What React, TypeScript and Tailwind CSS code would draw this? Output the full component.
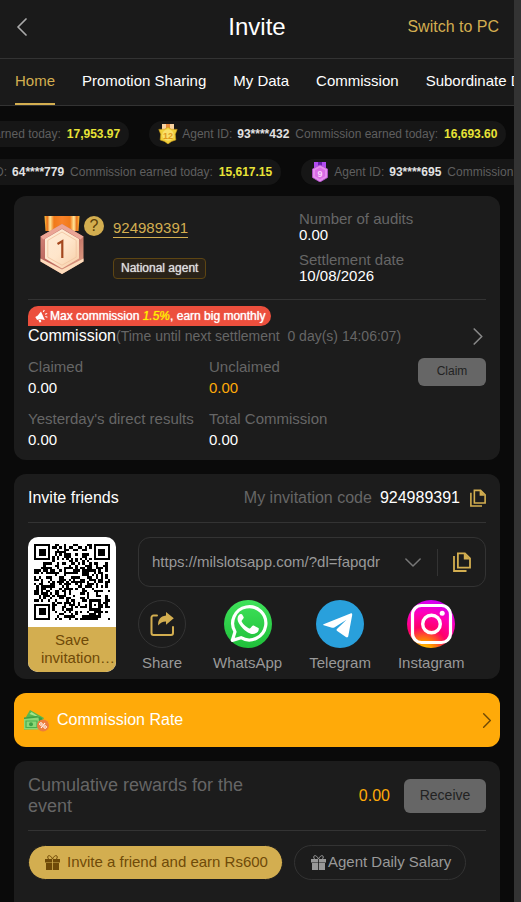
import React from "react";

/* ---------- QR code (version 4, level H, byte mode) ---------- */

const QR_SIZE = 33;
const QR_MASK = 4;

function gfMul(x: number, y: number): number {
  let z = 0;
  for (let i = 7; i >= 0; i--) {
    z = (z << 1) ^ ((z >>> 7) * 0x11d);
    z ^= ((y >>> i) & 1) * x;
  }
  return z;
}

function eccOf(data: number[], degree: number): number[] {
  const gen: number[] = new Array(degree).fill(0);
  gen[degree - 1] = 1;
  let root = 1;
  for (let i = 0; i < degree; i++) {
    for (let j = 0; j < degree; j++) {
      gen[j] = gfMul(gen[j], root);
      if (j + 1 < degree) gen[j] ^= gen[j + 1];
    }
    root = gfMul(root, 2);
  }
  const rem: number[] = new Array(degree).fill(0);
  for (const b of data) {
    const f = b ^ (rem.shift() as number);
    rem.push(0);
    gen.forEach((g, i) => (rem[i] ^= gfMul(g, f)));
  }
  return rem;
}

function qrMatrix(text: string): boolean[][] {
  const bits: number[] = [];
  const put = (v: number, n: number) => {
    for (let i = n - 1; i >= 0; i--) bits.push((v >>> i) & 1);
  };
  put(4, 4);
  put(text.length, 8);
  for (const c of text) put(c.charCodeAt(0), 8);
  put(0, 4);
  const words: number[] = [];
  for (let i = 0; i < 36; i++) {
    words.push(parseInt(bits.slice(i * 8, i * 8 + 8).join(""), 2));
  }
  const blocks = [0, 1, 2, 3].map((b) => words.slice(b * 9, b * 9 + 9));
  const eccs = blocks.map((b) => eccOf(b, 16));
  const stream: number[] = [];
  for (let i = 0; i < 9; i++) blocks.forEach((b) => stream.push(b[i]));
  for (let i = 0; i < 16; i++) eccs.forEach((b) => stream.push(b[i]));

  const n = QR_SIZE;
  const m: boolean[][] = Array.from({ length: n }, () => new Array(n).fill(false));
  const fixed: boolean[][] = Array.from({ length: n }, () => new Array(n).fill(false));
  const set = (x: number, y: number, v: boolean) => {
    if (x < 0 || y < 0 || x >= n || y >= n) return;
    m[y][x] = v;
    fixed[y][x] = true;
  };
  for (let i = 0; i < n; i++) {
    set(6, i, i % 2 === 0);
    set(i, 6, i % 2 === 0);
  }
  for (const [cx, cy] of [[3, 3], [n - 4, 3], [3, n - 4]]) {
    for (let dy = -4; dy <= 4; dy++)
      for (let dx = -4; dx <= 4; dx++) {
        const d = Math.max(Math.abs(dx), Math.abs(dy));
        set(cx + dx, cy + dy, d !== 2 && d !== 4);
      }
  }
  for (let dy = -2; dy <= 2; dy++)
    for (let dx = -2; dx <= 2; dx++)
      set(26 + dx, 26 + dy, Math.max(Math.abs(dx), Math.abs(dy)) !== 1);

  const info = (2 << 3) | QR_MASK;
  let rem = info;
  for (let i = 0; i < 10; i++) rem = (rem << 1) ^ ((rem >>> 9) * 0x537);
  const fmt = ((info << 10) | rem) ^ 0x5412;
  const bit = (i: number) => ((fmt >>> i) & 1) === 1;
  for (let i = 0; i <= 5; i++) set(8, i, bit(i));
  set(8, 7, bit(6));
  set(8, 8, bit(7));
  set(7, 8, bit(8));
  for (let i = 9; i < 15; i++) set(14 - i, 8, bit(i));
  for (let i = 0; i < 8; i++) set(n - 1 - i, 8, bit(i));
  for (let i = 8; i < 15; i++) set(8, n - 15 + i, bit(i));
  set(8, n - 8, true);

  let k = 0;
  for (let right = n - 1; right >= 1; right -= 2) {
    if (right === 6) right = 5;
    for (let v = 0; v < n; v++) {
      for (let j = 0; j < 2; j++) {
        const x = right - j;
        const y = ((right + 1) & 2) === 0 ? n - 1 - v : v;
        if (fixed[y][x]) continue;
        const on = k < 800 && ((stream[k >>> 3] >>> (7 - (k & 7))) & 1) === 1;
        k++;
        m[y][x] = on !== ((Math.floor(x / 3) + Math.floor(y / 2)) % 2 === 0);
      }
    }
  }
  return m;
}

const INVITE_URL = "https://milslotsapp.com/?dl=fapqdr";
const qrPath = qrMatrix(INVITE_URL)
  .map((row, y) => row.map((on, x) => (on ? `M${x} ${y}h1v1h-1z` : "")).join(""))
  .join("");

/* ---------- Icons ---------- */

function Chevron({ className, d = "M2 1l8 8-8 8", box = "0 0 12 18" }: { className: string; d?: string; box?: string }) {
  return (
    <svg viewBox={box} className={className} fill="none" stroke="currentColor" strokeWidth="1.700" strokeLinecap="round" strokeLinejoin="round" aria-hidden="true">
      <path d={d} />
    </svg>
  );
}

function CopyIcon({ className }: { className: string }) {
  return (
    <svg viewBox="0 0 18 20" className={className} aria-hidden="true">
      <path d="M1 4v15h12.500" fill="none" stroke="#d3ae50" strokeWidth="1.800" />
      <path d="M4.900 1.400h7l5.100 5v9.300H4.900z" fill="none" stroke="#d3ae50" strokeWidth="1.800" />
      <path d="M10.800 1v6.500h6.200z" fill="#d3ae50" />
    </svg>
  );
}

function Gift({ className }: { className: string }) {
  return (
    <svg viewBox="0 0 15 15" className={className} fill="currentColor" aria-hidden="true">
      <path d="M0 4h7.100v3.400H0zM7.900 4H15v3.400H7.900zM1 8.100h6.100V15H1zM7.900 8.100H14V15H7.900z" />
      <path d="M7.500 4C6 1 4.800.6 3.800.6 2.600.6 2.300 3 3.600 4M7.500 4C9 1 10.200.6 11.200.6c1.200 0 1.500 2.400.2 3.400" fill="none" stroke="currentColor" strokeWidth="1" />
    </svg>
  );
}

function StarMedal() {
  return (
    <svg viewBox="0 0 20 20" className="size-5 shrink-0" aria-hidden="true">
      <path d="M4 0h12v6H4z" fill="#f9d3a0" />
      <path d="M8 0h4v5H8z" fill="#e88a3c" />
      <path d="M10 3l3.200 2.200 6 .2-1.900 4.800.5 5.800-4.300 1.400L10 20l-3.500-2.600L2.200 16l.5-5.800L.8 5.400l6-.2z" fill="#f0cf3a" stroke="#c8971a" strokeWidth=".6" />
      <circle cx="10" cy="11" r="5.800" fill="#fae06a" />
      <text x="10" y="14.500" textAnchor="middle" fontSize="9" fontWeight="700" fill="#e09a1e">12</text>
    </svg>
  );
}

function VioletMedal() {
  return (
    <svg viewBox="0 0 20 20" className="size-5 shrink-0" aria-hidden="true">
      <path d="M4 0h12v6H4z" fill="#b24cf0" />
      <path d="M8 0h4v6H8z" fill="#6a1fb0" />
      <path d="M10 3l7.500 4v8.500L10 20l-7.500-4.500V7z" fill="#e58bee" stroke="#b34fd0" strokeWidth=".8" />
      <path d="M10 5.500l5 2.700v6L10 17.200l-5-3V8.200z" fill="#d96be6" />
      <text x="10" y="14.500" textAnchor="middle" fontSize="9" fontWeight="700" fill="#f8d4fb">9</text>
    </svg>
  );
}

function BronzeMedal() {
  return (
    <svg viewBox="0 0 44 58" className="h-[58px] w-11" aria-hidden="true">
      <defs>
        <linearGradient id="ribbon" x1="0" x2="1" y1="0" y2="0">
          <stop offset="0" stopColor="#ffc23c" />
          <stop offset=".08" stopColor="#e8701a" />
          <stop offset=".16" stopColor="#ffe89a" />
          <stop offset=".27" stopColor="#f07a1a" />
          <stop offset=".5" stopColor="#f9832a" />
          <stop offset=".73" stopColor="#f07a1a" />
          <stop offset=".84" stopColor="#ffe89a" />
          <stop offset=".92" stopColor="#e8701a" />
          <stop offset="1" stopColor="#ffc23c" />
        </linearGradient>
        <linearGradient id="bronze" x1="0" x2="1" y1="0" y2="1">
          <stop offset="0" stopColor="#d98c80" />
          <stop offset=".45" stopColor="#b8655c" />
          <stop offset="1" stopColor="#e8a98c" />
        </linearGradient>
        <linearGradient id="face" x1="0" x2="1" y1="0" y2="1">
          <stop offset="0" stopColor="#fdebd6" />
          <stop offset=".5" stopColor="#ffe6cb" />
          <stop offset="1" stopColor="#f6cda6" />
        </linearGradient>
      </defs>
      <path d="M4.500 0h35l-1 15h-33z" fill="url(#ribbon)" />
      <path d="M22 8l21.500 12.500v25L22 58 .5 45.500v-25z" fill="url(#bronze)" />
      <path d="M.5 42.500L22 53.500l21.500-11v3L22 58 .5 45.500z" fill="#fddcbc" />
      <path d="M22 8l21.500 12.500-3 3L22 12.500 3.500 23.500l-3-3z" fill="#eba595" />
      <path d="M22 13l17 10v19.500L22 52.500 5 42.500V23z" fill="url(#face)" />
      <path d="M22 16l14.200 8.400v16.800L22 49.200 7.800 41.200V24.400z" fill="none" stroke="#f3c9a6" strokeWidth="1" />
      <path d="M17.500 28l4.800-2.800v16.800" fill="none" stroke="#a4481e" strokeWidth="2.200" />
    </svg>
  );
}

function Megaphone() {
  return (
    <svg viewBox="0 0 14 14" className="size-[14px] shrink-0" fill="#fff" aria-hidden="true">
      <path d="M7 2.500l3.800 8.400-5.400-.8-2.300.9L1.300 7.900l2.500-1.300z" />
      <path d="M4.200 10.500l2.600.2.500 2.300-1.700.5z" />
      <path d="M9.300 2.900l1-1.900M11 5.200l2.200-.7M11.400 7.600l2 .7" stroke="#fff" strokeWidth="1.100" />
    </svg>
  );
}

function ShareIcon() {
  return (
    <svg viewBox="0 0 24 24" className="size-6" aria-hidden="true">
      <path d="M7 3.500H3.500a2 2 0 0 0-2 2V21a2 2 0 0 0 2 2H21a2 2 0 0 0 2-2v-6" fill="none" stroke="#d3ae50" strokeWidth="2" strokeLinecap="round" />
      <path d="M16 0l7.800 6.300-7.800 6.400V9.500c-3.600 0-5.600 1-7.800 4.100C7.700 8 10.200 4.200 16 3.500z" fill="#d3ae50" />
    </svg>
  );
}

function WhatsAppIcon() {
  return (
    <svg viewBox="0 0 48 48" className="size-12" aria-hidden="true">
      <defs>
        <linearGradient id="wa" x1="0" x2="0" y1="0" y2="1">
          <stop offset="0" stopColor="#3fe25a" />
          <stop offset="1" stopColor="#1fbf3a" />
        </linearGradient>
      </defs>
      <circle cx="24" cy="24" r="24" fill="url(#wa)" />
      <path d="M8.300 40.400l2.700-8.600a16.600 16.600 0 1 1 6 5.900z" fill="none" stroke="#fff" strokeWidth="3.200" strokeLinejoin="round" />
      <path d="M18.600 15.200c-.5-1.100-1.200-1.100-1.800-1.100-1.200 0-3.300 1.500-3.300 4.900 0 3.200 2.300 6 5.400 9.400 4 4.100 7.500 5.500 9.900 5.500 3 0 5.400-1.900 5.800-3.700.3-1.200.3-2-.2-2.300l-4.700-2.300c-.6-.3-1.100-.2-1.500.4l-1.700 2.100c-.4.500-.8.500-1.400.3-1.500-.6-5.800-3.400-7.400-6.900-.2-.5-.1-.9.300-1.300l1.500-1.900c.3-.5.300-.9.100-1.300z" fill="#fff" />
    </svg>
  );
}

function TelegramIcon() {
  return (
    <svg viewBox="0 0 48 48" className="size-12" aria-hidden="true">
      <circle cx="24" cy="24" r="24" fill="#29a0dc" />
      <path d="M7.500 24.200L34.500 13.400c1.200-.4 1.900.3 1.700 1.600L32.300 36c-.3 1.500-1.200 1.800-2.400 1.100l-8.700-6.100c-.9-.7-.8-1.500 0-2.200l9.300-9-12.200 7.600c-.8.500-1.500.6-2.300.3l-8.300-2.500c-.7-.3-.7-.8-.2-1z" fill="#fff" />
    </svg>
  );
}

function InstagramIcon() {
  return (
    <svg viewBox="0 0 48 48" className="size-12" aria-hidden="true">
      <defs>
        <radialGradient id="ig" cx=".35" cy="1.080" r="1.080">
          <stop offset="0" stopColor="#ffe000" />
          <stop offset=".22" stopColor="#ff8a00" />
          <stop offset=".48" stopColor="#ff0069" />
          <stop offset=".75" stopColor="#ff00b8" />
          <stop offset="1" stopColor="#d300f5" />
        </radialGradient>
      </defs>
      <circle cx="24" cy="24" r="24" fill="url(#ig)" />
      <rect x="5.500" y="5.500" width="38" height="37" rx="9" fill="none" stroke="#fff" strokeWidth="3.200" />
      <circle cx="24.500" cy="24" r="8.800" fill="none" stroke="#fff" strokeWidth="3.400" />
      <circle cx="35.200" cy="13.300" r="2.500" fill="#fff" />
    </svg>
  );
}

function MoneyIcon() {
  return (
    <svg viewBox="0 0 26 24" className="h-6 w-[26px] shrink-0" aria-hidden="true">
      <path d="M3 9l4-7 14 8-3 5z" fill="#57b84f" />
      <path d="M6.500 6l2-2 9 6z" fill="#a4e58c" />
      <path d="M1 9.500L14 8l5 2v11L1 21.500z" fill="#3f9f45" />
      <path d="M1 11l14.500-1.500L17 21.500H1z" fill="#8ad877" />
      <path d="M3 13h11v6.500H3z" fill="none" stroke="#4caf50" strokeWidth="1.200" />
      <circle cx="8" cy="16.200" r="2" fill="#3f9f45" />
      <circle cx="20" cy="17.500" r="6" fill="#ee7d3b" />
      <path d="M18 20l4-5" stroke="#fff" strokeWidth="1.200" />
      <circle cx="17.900" cy="16" r="1.300" fill="none" stroke="#fff" />
      <circle cx="22.100" cy="19" r="1.300" fill="none" stroke="#fff" />
    </svg>
  );
}

/* ---------- Pieces ---------- */

function Pill({ icon, id, amount }: { icon: React.ReactNode; id: string; amount: string }) {
  return (
    <li className="flex h-[26px] shrink-0 items-center whitespace-nowrap rounded-full bg-[#161616] px-[9px] text-xs text-[#5f5f5f]">
      {icon}
      <span className="ml-1">Agent ID:</span>
      <b className="ml-[5px] text-[#e2e2e2]">{id}</b>
      <span className="ml-1.5">Commission earned today:</span>
      <b className="ml-1.5 text-[#e8e337]">{amount}</b>
    </li>
  );
}

function Stat({ label, value, gold = false }: { label: string; value: string; gold?: boolean }) {
  return (
    <div>
      <dt className="text-[#666]">{label}</dt>
      <dd className={gold ? "text-[#ffaa09]" : "text-white"}>{value}</dd>
    </div>
  );
}

function Share({ label, children }: { label: string; children: React.ReactNode }) {
  return (
    <button type="button" className="flex min-w-12 flex-col items-center gap-1.5 text-[15px] leading-[18px] text-[#999]">
      {children}
      {label}
    </button>
  );
}

const tabs = ["Home", "Promotion Sharing", "My Data", "Commission", "Subordinate Data"];

export default function App() {
  return (
    <div className="flex min-h-screen bg-[#333] font-['Liberation_Sans',Arial,sans-serif] text-white">
      <div className="mr-[7px] flex min-w-0 flex-1 flex-col overflow-hidden bg-[#0a0a0a]">
        <header className="grid h-[59px] grid-cols-[1fr_auto_1fr] items-center border-b border-[#333] bg-[#1a1a1a] px-[15px] pb-1">
          <button type="button" aria-label="Back" className="justify-self-start text-[#aaa]">
            <Chevron className="h-[18px] w-[14px]" d="M10 1L2 9l8 8" />
          </button>
          <h1 className="text-2xl">Invite</h1>
          <a href="#pc" className="justify-self-end text-base text-[#d3ae50]">Switch to PC</a>
        </header>

        <nav className="flex h-[47px] gap-[27px] overflow-hidden border-b border-[#333] bg-[#1a1a1a] px-[15px] text-[15px]">
          {tabs.map((t, i) => (
            <a
              key={t}
              href={"#tab" + i}
              className={
                i === 0
                  ? "flex shrink-0 items-center border-b-2 border-[#d3ae50] text-[#d3ae50]"
                  : "flex shrink-0 items-center border-b-2 border-transparent"
              }
            >
              {t}
            </a>
          ))}
        </nav>

        <div className="mt-[15px] flex flex-col gap-3 overflow-hidden">
          <ul className="-ml-[228px] flex gap-5">
            <Pill icon={<StarMedal />} id="68****215" amount="17,953.97" />
            <Pill icon={<StarMedal />} id="93****432" amount="16,693.60" />
          </ul>
          <ul className="-ml-[76px] flex gap-5">
            <Pill icon={<VioletMedal />} id="64****779" amount="15,617.15" />
            <Pill icon={<VioletMedal />} id="93****695" amount="14,820.30" />
          </ul>
        </div>

        <main className="mt-[11px] flex flex-1 flex-col gap-[14px] px-[14px]">
          <section className="rounded-xl bg-[#1c1c1c] px-[14px] pb-[10px]">
            <div className="flex h-[104px] border-b border-[#333]">
              <div className="flex flex-1 pl-3 pt-5">
                <BronzeMedal />
                <button type="button" aria-label="Help" className="size-5 rounded-full bg-[#d3ae50] text-base leading-5 text-[#5c4008]">?</button>
                <div className="ml-[9px] mt-[3px] flex flex-col items-start">
                  <a href="#id" className="border-b border-[#d3ae50] text-[15px] leading-[18px] text-[#d3ae50]">924989391</a>
                  <span className="mt-5 rounded border border-[#5d4513] bg-[#292218] px-[7px] text-xs leading-[19px] text-[#ddd] [text-shadow:0_0_1px_#ddd]">National agent</span>
                </div>
              </div>
              <dl className="w-[187px] pt-[15px] text-[15px] leading-4">
                <dt className="text-[#666]">Number of audits</dt>
                <dd>0.00</dd>
                <dt className="mt-[9px] text-[#666]">Settlement date</dt>
                <dd>10/08/2026</dd>
              </dl>
            </div>

            <p className="mt-1.5 flex h-5 w-fit items-center rounded-r-[10px] rounded-tl-[10px] bg-[#ec4f3d] px-[6px] text-xs [text-shadow:0_0_1px_#fff]">
              <Megaphone />
              <span className="ml-0.5">Max commission <i className="text-[#fff000] [text-shadow:0_0_1px_#fff000]">1.5%</i>, earn big monthly</span>
            </p>
            <button type="button" className="flex h-5 w-full items-center text-base">
              Commission
              <span className="text-sm text-[#666]">(Time until next settlement&nbsp; 0 day(s) 14:06:07)</span>
              <Chevron className="ml-auto mr-0.5 h-[17px] w-3 text-[#888]" />
            </button>

            <div className="mt-2.5 flex items-start">
              <dl className="grid flex-1 grid-cols-[181px_1fr] gap-y-2.5 text-[15px] leading-[21px]">
                <Stat label="Claimed" value="0.00" />
                <Stat label="Unclaimed" value="0.00" gold />
                <Stat label="Yesterday's direct results" value="0.00" />
                <Stat label="Total Commission" value="0.00" />
              </dl>
              <button type="button" className="mt-0.5 h-7 w-[68px] rounded-md bg-[#666] pb-0.5 text-xs text-[#222]">Claim</button>
            </div>
          </section>

          <section className="rounded-xl bg-[#1c1c1c] px-[14px] pb-[7px]">
            <div className="flex h-[49px] items-center border-b border-[#333] text-base">
              <h2>Invite friends</h2>
              <span className="ml-auto text-[#666]">My invitation code</span>
              <span className="ml-2">924989391</span>
              <button type="button" aria-label="Copy invitation code" className="ml-2.5">
                <CopyIcon className="h-[18px] w-4" />
              </button>
            </div>
            <div className="mt-[14px] flex gap-[22px]">
              <button type="button" className="flex h-[135px] w-[88px] flex-col items-center overflow-hidden rounded-[10px] bg-white text-[15px] leading-[18px] text-[#6f4a08]">
                <svg viewBox="0 0 33 33" className="my-[7px] size-[76px] shrink-0" role="img" aria-label="Invitation QR code">
                  <path d={qrPath} fill="#000" shapeRendering="crispEdges" />
                </svg>
                <span className="w-full flex-1 bg-[#d3ae50] pt-1">
                  Save
                  <span className="block pl-3">invitation…</span>
                </span>
              </button>
              <div className="min-w-0 flex-1">
                <div className="flex h-[50px] items-center rounded-xl border border-[#333] pl-[13px] pr-[14px]">
                  <select aria-label="Invitation link" className="min-w-0 flex-1 appearance-none bg-transparent text-[15px] text-[#999] outline-none">
                    <option>{INVITE_URL}</option>
                  </select>
                  <Chevron className="h-[9px] w-4 text-[#777]" d="M1 1l8 8 8-8" box="0 0 18 10" />
                  <span className="ml-4 h-[27px] border-l border-[#333]" />
                  <button type="button" aria-label="Copy link" className="ml-[15px]">
                    <CopyIcon className="h-5 w-[18px]" />
                  </button>
                </div>
                <div className="mt-[13px] flex gap-[27px]">
                  <Share label="Share">
                    <span className="flex size-12 items-center justify-center rounded-full border border-[#333]"><ShareIcon /></span>
                  </Share>
                  <Share label="WhatsApp"><WhatsAppIcon /></Share>
                  <Share label="Telegram"><TelegramIcon /></Share>
                  <Share label="Instagram"><InstagramIcon /></Share>
                </div>
              </div>
            </div>
          </section>

          <button type="button" className="flex h-[54px] w-full shrink-0 items-center rounded-xl bg-[#ffaa09] pl-[9px] pr-2 text-base">
            <MoneyIcon />
            <span className="ml-2">Commission Rate</span>
            <Chevron className="ml-auto h-[15px] w-[10px] text-[#6f4a08]" />
          </button>

          <section className="flex-1 rounded-t-xl bg-[#1c1c1c] px-[14px] pb-[22px]">
            <div className="flex h-[70px] items-center border-b border-[#333]">
              <h2 className="w-[230px] text-lg leading-[21px] text-[#666]">Cumulative rewards for the event</h2>
              <span className="ml-auto text-base text-[#ffaa09]">0.00</span>
              <button type="button" className="ml-[14px] h-[34px] w-[82px] rounded-md bg-[#666] pb-0.5 text-sm text-[#222]">Receive</button>
            </div>
            <div className="mt-[14px] flex gap-[11px] text-[15px]">
              <button type="button" className="flex h-[35px] items-center whitespace-nowrap rounded-full border border-[#1c1c1c] bg-[#d3ae50] pl-4 pr-[14px] text-[#6f4a08]">
                <Gift className="mr-[7px] size-[15px]" />
                Invite a friend and earn Rs600
              </button>
              <button type="button" className="flex h-[35px] items-center whitespace-nowrap rounded-full border border-[#333] pl-4 pr-[14px] text-[#999]">
                <Gift className="mr-0.5 size-[15px]" />
                Agent Daily Salary
              </button>
            </div>
          </section>
        </main>
      </div>
    </div>
  );
}
